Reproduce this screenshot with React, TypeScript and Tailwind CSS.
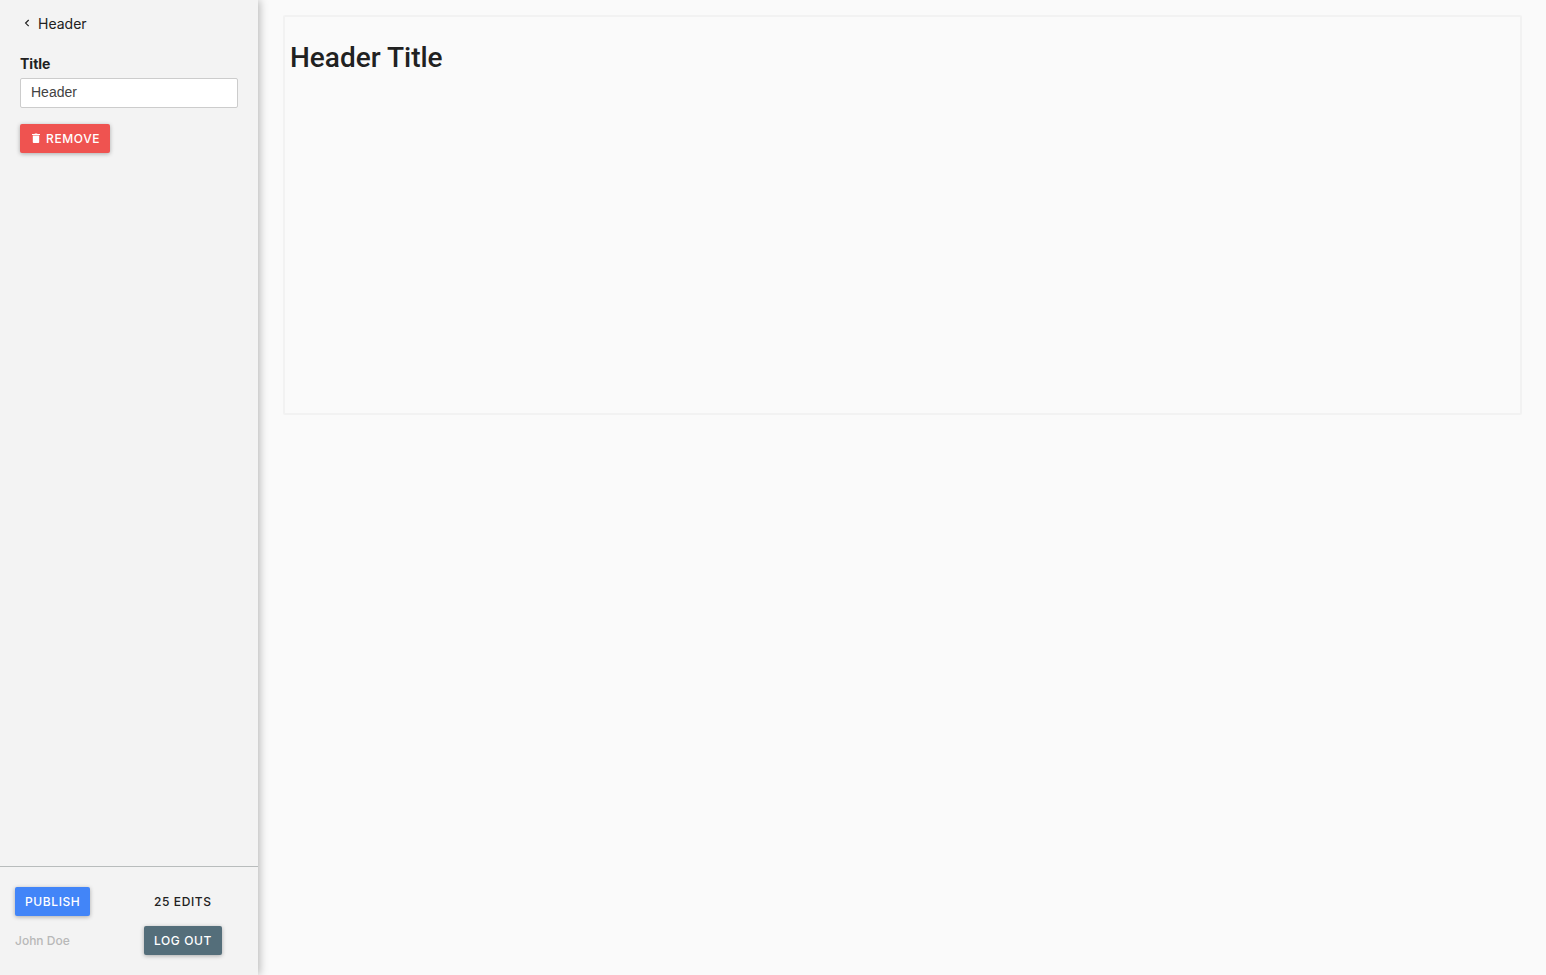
import { useState, type ReactNode } from "react";

const buttonBase =
  "inline-flex h-[29px] items-center rounded-[2px] px-[10px] text-xs font-medium uppercase tracking-wider text-white shadow-[0_1px_4px_rgba(0,0,0,0.3)]";

const tones = {
  danger: "bg-[#ef5350]",
  primary: "bg-[#4285f8]",
  neutral: "bg-[#546e7a]",
};

function Button({ tone, children }: { tone: keyof typeof tones; children: ReactNode }) {
  return (
    <button type="button" className={`${buttonBase} ${tones[tone]}`}>
      {children}
    </button>
  );
}

function ChevronIcon() {
  return (
    <svg viewBox="0 0 6 10" className="h-[10px] w-[6px]" fill="none" stroke="currentColor" strokeWidth="1.2" aria-hidden="true">
      <path d="M4.7 1 1.6 4.100l3.1 3.100" />
    </svg>
  );
}

function TrashIcon() {
  return (
    <svg viewBox="0 0 8 12" className="h-3 w-2" fill="currentColor" aria-hidden="true">
      <path d="M0 1h2.400L3 .400h2L5.600 1H8v1.100H0zM.8 2.600h6.400v6.600c0 .5-.3.8-.8.8H1.600c-.5 0-.8-.3-.8-.8z" />
    </svg>
  );
}

export default function App() {
  const [title, setTitle] = useState("Header");

  return (
    <div className="flex min-h-screen bg-[#fafafa] font-['Inter',sans-serif] text-[#212121]">
      <aside className="flex w-[258px] shrink-0 flex-col bg-[#f3f3f3] shadow-[2px_0_8px_rgba(0,0,0,0.25)]">
        <div className="flex-1 px-5 pt-[14px]">
          <button type="button" className="flex items-center gap-2 pl-1 text-sm leading-5">
            <ChevronIcon />
            Header
          </button>

          <label htmlFor="title" className="mt-5 block text-sm leading-5 font-bold">
            Title
          </label>
          <input
            id="title"
            type="text"
            value={title}
            onChange={(event) => setTitle(event.target.value)}
            className="mt-1 mb-4 block h-[30px] w-full rounded-[2px] border border-[#cccccc] bg-white px-[10px] pb-[2px] font-['Liberation_Sans',sans-serif] text-sm text-[#424242] outline-none"
          />

          <Button tone="danger">
            <span className="mr-[6px] ml-[2px]">
              <TrashIcon />
            </span>
            Remove
          </Button>
        </div>

        <footer className="grid grid-cols-[129px_1fr] items-center justify-items-start gap-y-[10px] border-t border-[#b8bcbc] px-[15px] py-5">
          <Button tone="primary">Publish</Button>
          <span className="pl-[10px] text-xs font-medium uppercase tracking-wider">25 edits</span>
          <span className="text-xs font-medium text-[#b8b8b8]">John Doe</span>
          <Button tone="neutral">Log out</Button>
        </footer>
      </aside>

      <main className="min-w-0 flex-1 py-[15px] pr-6 pl-[25px]">
        <section className="h-[400px] rounded-[2px] border-2 border-[#f2f2f2] px-[5px] pt-[21px]">
          <h1 className="font-['Roboto',sans-serif] text-[28px] leading-10 font-medium">Header Title</h1>
        </section>
      </main>
    </div>
  );
}
